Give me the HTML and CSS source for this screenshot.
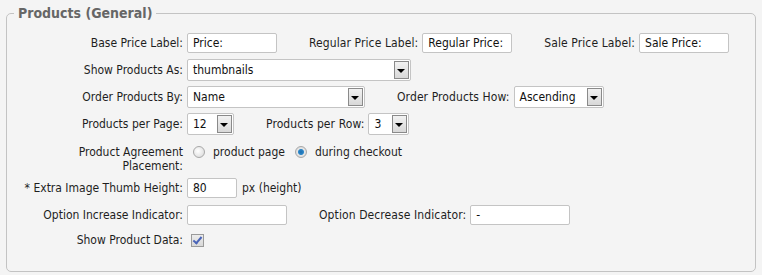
FILE: index.html
```html
<!DOCTYPE html>
<html lang="en">
  <head>
    <meta charset="UTF-8" />
    <title>Products (General)</title>
    <link rel="stylesheet" href="styles.css">
  </head>
  <body>
    <fieldset class="box">
      <legend>Products (General)</legend>

      <div class="row">
        <label class="lbl">Base Price Label:</label>
        <input type="text" class="txt w90" value="Price:" />
        <label class="lbl2">Regular Price Label:</label>
        <input type="text" class="txt w90" value="Regular Price:" />
        <label class="lbl2">Sale Price Label:</label>
        <input type="text" class="txt w90" value="Sale Price:" />
      </div>

      <div class="row">
        <label class="lbl">Show Products As:</label>
        <span class="sel w224">thumbnails</span>
      </div>

      <div class="row">
        <label class="lbl">Order Products By:</label>
        <span class="sel w178">Name</span>
        <label class="lbl2">Order Products How:</label>
        <span class="sel w90">Ascending</span>
      </div>

      <div class="row">
        <label class="lbl">Products per Page:</label>
        <span class="sel w47">12</span>
        <label class="lbl2">Products per Row:</label>
        <span class="sel w41">3</span>
      </div>

      <div class="row row-tall">
        <label class="lbl">Product Agreement<br />Placement:</label>
        <span class="opt"><i class="radio"></i>product page</span>
        <span class="opt"><i class="radio on"></i>during checkout</span>
      </div>

      <div class="row">
        <label class="lbl">* Extra Image Thumb Height:</label>
        <input type="text" class="txt w50" value="80" />
        <span class="unit">px (height)</span>
      </div>

      <div class="row">
        <label class="lbl">Option Increase Indicator:</label>
        <input type="text" class="txt w100" value="" />
        <label class="lbl2">Option Decrease Indicator:</label>
        <input type="text" class="txt w100" value="-" />
      </div>

      <div class="row row-last">
        <label class="lbl">Show Product Data:</label>
        <i class="check"></i>
      </div>
    </fieldset>
  </body>
</html>
```

FILE: styles.css
```css
body {
  margin: 0;
  padding: 5px 6px 0 6px;
  background-color: #f4f4f4;
  font-family: "DejaVu Sans Condensed", "DejaVu Sans", sans-serif;
  font-size: 12px;
  color: #1e1e1e;
}
.box {
  margin: 0;
  padding: 8px 0 19px 0;
  border: 1px solid #c3c3c3;
  border-radius: 5px;
}
.box legend {
  margin-left: 7px;
  padding: 0 4px;
  font-size: 14px;
  font-weight: bold;
  color: #666;
}
.row {
  display: flex;
  align-items: center;
  height: 27px;
}
.row-tall {
  align-items: flex-start;
  box-sizing: border-box;
  height: 37px;
  padding-top: 8px;
  line-height: 14px;
}
.row-last {
  height: 24px;
}
.lbl {
  width: 180px;
  padding-right: 4px;
  text-align: right;
  box-sizing: border-box;
}
.lbl2 {
  margin-left: 32px;
  margin-right: 4px;
  letter-spacing: 0.1px;
}
.txt {
  height: 20px;
  box-sizing: border-box;
  margin: 0;
  padding: 0 5px;
  border: 1px solid #c4c4c4;
  border-radius: 2px;
  background: #fff;
  font: inherit;
  color: #111;
}
.w50 { width: 50px; }
.w90 { width: 90px; }
.w100 { width: 100px; }
.sel {
  position: relative;
  display: inline-block;
  height: 22px;
  line-height: 20px;
  box-sizing: border-box;
  padding: 0 5px;
  border: 1px solid #c4c4c4;
  border-radius: 2px;
  background: #fff;
  color: #111;
}
.sel::after {
  content: "";
  position: absolute;
  top: 1px;
  right: 1px;
  width: 15px;
  height: 18px;
  box-sizing: border-box;
  border: 1px solid #8a8a8a;
  background: linear-gradient(#f2f2f2, #d8d8d8);
}
.sel::before {
  content: "";
  position: absolute;
  z-index: 1;
  top: 9px;
  right: 5px;
  border-left: 4px solid transparent;
  border-right: 4px solid transparent;
  border-top: 4px solid #000;
}
.w224 { width: 224px; }
.w178 { width: 178px; }
.w47 { width: 47px; }
.w41 { width: 41px; }
.opt {
  display: inline-flex;
  align-items: center;
  margin-right: 4px;
}
.radio {
  display: inline-block;
  width: 12px;
  height: 12px;
  margin: 0 8px 0 6px;
  border: 1px solid #a8a8a8;
  border-radius: 50%;
  box-sizing: border-box;
  background: radial-gradient(circle at 40% 40%, #fff, #d6d6d6);
}
.radio.on {
  background: radial-gradient(circle, #1d6fb0 0, #2b86c8 2.5px, #e6e6e6 3.5px, #d0d0d0 100%);
}
.unit {
  margin-left: 5px;
}
.check {
  position: relative;
  display: inline-block;
  width: 13px;
  height: 13px;
  margin-left: 4px;
  box-sizing: border-box;
  border: 1px solid #9a9a9a;
  background: linear-gradient(#ececec, #d8d8d8);
}
.check::after {
  content: "";
  position: absolute;
  left: 3px;
  top: 0px;
  width: 3px;
  height: 7px;
  border-right: 2px solid #4a64b8;
  border-bottom: 2px solid #4a64b8;
  transform: rotate(40deg);
}
```
